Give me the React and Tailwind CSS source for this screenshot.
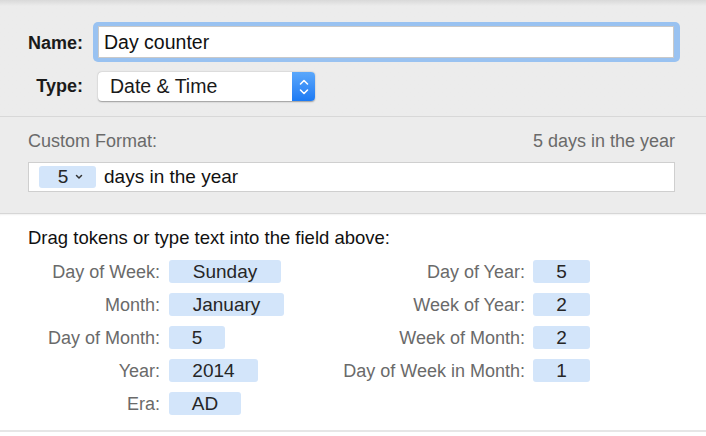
import React from "react";

const font = { fontFamily: '"Liberation Sans", Arial, sans-serif' };

function Token({ children, w }) {
  return (
    <div
      className="h-[23px] rounded-[3px] bg-[#d3e5fa] text-[19px] leading-[24px] text-[#262626] text-center"
      style={{ width: w }}
    >
      {children}
    </div>
  );
}

function Label({ children }) {
  return (
    <div className="h-[23px] text-right text-[18px] leading-[25px] text-[#6a6a6a] whitespace-nowrap">
      {children}
    </div>
  );
}

export default function App() {
  const left = [
    ["Day of Week:", "Sunday", 112],
    ["Month:", "January", 115],
    ["Day of Month:", "5", 56],
    ["Year:", "2014", 89],
    ["Era:", "AD", 72],
  ];
  const right = [
    ["Day of Year:", "5"],
    ["Week of Year:", "2"],
    ["Week of Month:", "2"],
    ["Day of Week in Month:", "1"],
  ];
  return (
    <div className="w-[706px] h-[436px] overflow-hidden bg-white" style={font}>
      {/* top section */}
      <div className="bg-gradient-to-b from-[#d9d9d9] via-[#ececec] via-[6px] to-[#ececec] h-[117px] pt-[22px] border-b border-[#d8d8d8]">
        <div className="flex items-center h-[40px]">
          <div className="w-[83px] text-right text-[18px] leading-[26px] pt-[2px] font-bold text-[#1a1a1a]">Name:</div>
          <div className="ml-[10px] w-[587px] h-[40px] rounded-[5px] bg-[#99c2f1] p-[4px] pl-[5px] pr-[6px]">
            <div className="h-full bg-white border border-[#c9c9c9] pl-[5px] text-[19.5px] leading-[30px] text-[#111]">
              Day counter
            </div>
          </div>
        </div>
        <div className="flex items-center mt-[10px] h-[29px]">
          <div className="w-[83px] text-right text-[18px] font-bold text-[#1a1a1a]">Type:</div>
          <div className="ml-[15px] w-[217px] h-[29px] flex rounded-[4px] bg-white shadow-[0_0.5px_1.5px_rgba(0,0,0,0.35)]">
            <div className="flex-1 pl-[12px] text-[19.5px] leading-[29px] text-[#1a1a1a]">Date &amp; Time</div>
            <div className="w-[23px] h-full rounded-r-[4px] bg-gradient-to-b from-[#5aa7fb] to-[#1b7af4] flex items-center justify-center">
              <svg width="10" height="18" viewBox="0 0 10 18" fill="none" stroke="white" strokeWidth="1.6" strokeLinecap="round" strokeLinejoin="round">
                <path d="M1.5 6 L5 2.5 L8.5 6" />
                <path d="M1.5 12 L5 15.5 L8.5 12" />
              </svg>
            </div>
          </div>
        </div>
      </div>

      {/* custom format section */}
      <div className="bg-[#ececec] h-[97px] px-[28px] pt-[12px] border-b border-[#d6d6d6]">
        <div className="flex justify-between text-[18px] leading-[24px] text-[#6a6a6a] pr-[3px]">
          <span>Custom Format:</span>
          <span>5 days in the year</span>
        </div>
        <div className="mt-[9px] w-[647px] h-[30px] bg-white border border-[#cfcfcf] flex items-center pl-[10px]">
          <div className="w-[57px] h-[22px] rounded-[3px] bg-[#d3e5fa] flex items-center justify-center gap-[7px] text-[19px] text-[#262626]">
            <span className="leading-[22px] ml-[6px]">5</span>
            <svg width="8" height="6" viewBox="0 0 8 6" fill="none" stroke="#333" strokeWidth="1.5" strokeLinecap="round" strokeLinejoin="round">
              <path d="M1.5 1.5 L4 4 L6.5 1.5" />
            </svg>
          </div>
          <span className="ml-[8px] text-[19px] leading-[22px] text-[#111]">days in the year</span>
        </div>
      </div>

      {/* tokens section */}
      <div className="h-[218px] bg-white border-b-[2px] border-[#e6e6e6] pt-[13px] shadow-[inset_0_2px_2px_-1px_rgba(0,0,0,0.06)]">
        <div className="pl-[28px] text-[18.5px] leading-[22px] text-[#111]">
          Drag tokens or type text into the field above:
        </div>
        <div className="flex mt-[11px]">
          <div className="ml-[28px] grid grid-cols-[132px_auto] gap-x-[9px] gap-y-[10px] w-[302px] content-start">
            {left.map(([l, v, w]) => (
              <React.Fragment key={l}>
                <Label>{l}</Label>
                <Token w={w}>{v}</Token>
              </React.Fragment>
            ))}
          </div>
          <div className="grid grid-cols-[195px_57px] gap-x-[8px] gap-y-[10px] content-start">
            {right.map(([l, v]) => (
              <React.Fragment key={l}>
                <Label>{l}</Label>
                <Token w={57}>{v}</Token>
              </React.Fragment>
            ))}
          </div>
        </div>
      </div>
    </div>
  );
}
